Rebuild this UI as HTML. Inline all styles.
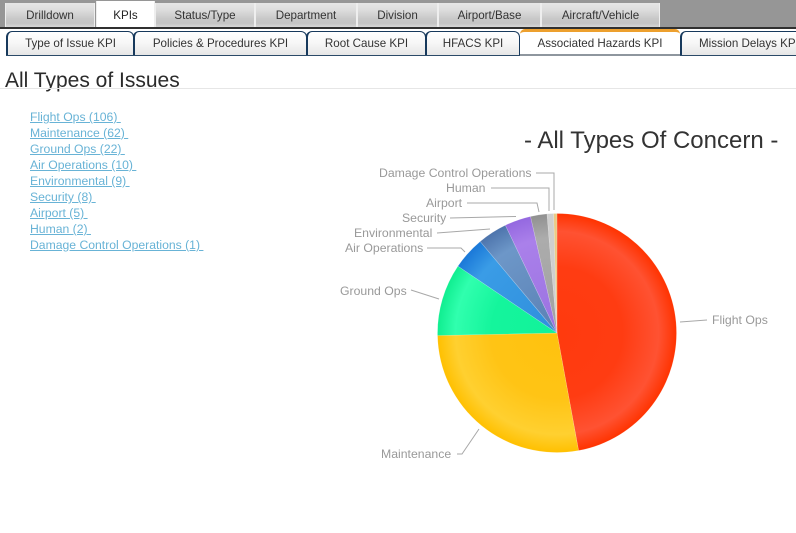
<!DOCTYPE html>
<html><head><meta charset="utf-8">
<style>
html,body{margin:0;padding:0;background:#fff;}
#p{position:relative;width:796px;height:533px;overflow:hidden;font-family:"Liberation Sans",sans-serif;background:#fff;}
.bar{position:absolute;left:0;top:0;width:796px;height:27px;background:#969696;}
.line{position:absolute;left:0;top:27px;width:796px;height:2px;background:#303030;}
.t{position:absolute;top:3px;height:24px;box-sizing:border-box;text-align:center;font-size:11.6px;line-height:25px;color:#333;background:linear-gradient(#e6e6e6 0,#dcdcdc 30%,#c8c8c8 65%,#c4c4c4 85%,#d6d6d6 100%);border-left:1px solid #eee;border-right:1px solid #eee;}
.t.a{background:#fff;top:1px;height:26px;line-height:29px;color:#222;}
.s{position:absolute;top:31px;height:24px;box-sizing:border-box;text-align:center;font-size:11.6px;line-height:24px;color:#333;background:linear-gradient(#fff 0,#f6f6f6 50%,#e6e6e6 100%);border-left:2px solid #17395c;border-right:1px solid #17395c;border-top:1px solid #17395c;border-radius:6px 6px 0 0;}
.s.a{background:#fff;border:none;border-top:3px solid #eda02e;top:29px;height:25px;line-height:23px;border-radius:5px 5px 0 0;}
.u{position:absolute;left:6px;top:54px;width:790px;height:2px;background:#2b4a68;}
.ug{position:absolute;left:520px;top:54px;width:160px;height:2px;background:#8e969e;}
h1{position:absolute;margin:0;left:5px;top:69px;font-size:21px;font-weight:normal;line-height:24px;color:#2b2b2b;white-space:nowrap;}
.hr{position:absolute;left:0;top:88px;width:796px;height:1px;background:#e6e6e6;}
a{position:absolute;left:30px;font-size:12.2px;line-height:16px;color:#68b3d6;text-decoration:underline;white-space:pre;}
.title{position:absolute;left:524px;top:126px;font-size:24px;line-height:30px;color:#333;white-space:nowrap;}
svg{position:absolute;left:0;top:0;}
svg text{font-family:"Liberation Sans",sans-serif;font-size:12.25px;fill:#999;}
</style></head><body><div id="p">
<div class="bar"></div>
<div class="t" style="left:5px;width:90px">Drilldown</div>
<div class="t a" style="left:96px;width:59px">KPIs</div>
<div class="t" style="left:155px;width:100px">Status/Type</div>
<div class="t" style="left:255px;width:102px">Department</div>
<div class="t" style="left:357px;width:81px">Division</div>
<div class="t" style="left:438px;width:103px">Airport/Base</div>
<div class="t" style="left:541px;width:119px">Aircraft/Vehicle</div>
<div class="line"></div>
<div class="u"></div>
<div class="ug"></div>
<div class="s" style="left:6px;width:128px">Type of Issue KPI</div>
<div class="s" style="left:133px;width:174px">Policies &amp; Procedures KPI</div>
<div class="s" style="left:306px;width:120px">Root Cause KPI</div>
<div class="s" style="left:425px;width:95px">HFACS KPI</div>
<div class="s a" style="left:520px;width:160px">Associated Hazards KPI</div>
<div class="s" style="left:680px;width:130px;text-align:left;padding-left:17px">Mission Delays KPI</div>
<h1>All Types of Issues</h1>
<div class="hr"></div>
<a style="top:109px">Flight Ops (106) </a>
<a style="top:125px">Maintenance (62) </a>
<a style="top:141px">Ground Ops (22) </a>
<a style="top:157px">Air Operations (10) </a>
<a style="top:173px">Environmental (9) </a>
<a style="top:189px">Security (8) </a>
<a style="top:205px">Airport (5) </a>
<a style="top:221px">Human (2) </a>
<a style="top:237px">Damage Control Operations (1) </a>
<div class="title">- All Types Of Concern -</div>
<svg width="796" height="533" viewBox="0 0 796 533">
<defs>
<radialGradient id="g1" gradientUnits="userSpaceOnUse" cx="557" cy="333" r="119.5"><stop offset="0" stop-color="#ff3a0e"/><stop offset=".55" stop-color="#ff3c12"/><stop offset=".85" stop-color="#ff5232"/><stop offset="1" stop-color="#ff3300"/></radialGradient>
<radialGradient id="g2" gradientUnits="userSpaceOnUse" cx="557" cy="333" r="119.5"><stop offset="0" stop-color="#ffc20e"/><stop offset=".55" stop-color="#ffc415"/><stop offset=".85" stop-color="#ffd030"/><stop offset="1" stop-color="#ffc000"/></radialGradient>
<radialGradient id="g3" gradientUnits="userSpaceOnUse" cx="557" cy="333" r="119.5"><stop offset="0" stop-color="#12f29a"/><stop offset=".55" stop-color="#14f59c"/><stop offset=".85" stop-color="#30ffae"/><stop offset="1" stop-color="#10ee90"/></radialGradient>
<radialGradient id="g4" gradientUnits="userSpaceOnUse" cx="557" cy="333" r="119.5"><stop offset="0" stop-color="#2f8fdc"/><stop offset=".8" stop-color="#3a9ce6"/><stop offset="1" stop-color="#1a78d8"/></radialGradient>
<radialGradient id="g5" gradientUnits="userSpaceOnUse" cx="557" cy="333" r="119.5"><stop offset="0" stop-color="#5a80b4"/><stop offset=".8" stop-color="#6d97c8"/><stop offset="1" stop-color="#4d74ac"/></radialGradient>
<radialGradient id="g6" gradientUnits="userSpaceOnUse" cx="557" cy="333" r="119.5"><stop offset="0" stop-color="#9a72e0"/><stop offset=".8" stop-color="#aa80ea"/><stop offset="1" stop-color="#9468e0"/></radialGradient>
<radialGradient id="g7" gradientUnits="userSpaceOnUse" cx="557" cy="333" r="119.5"><stop offset="0" stop-color="#a0a0a0"/><stop offset=".8" stop-color="#acacac"/><stop offset="1" stop-color="#909090"/></radialGradient>
</defs>
<g stroke="#fff" stroke-opacity=".25" stroke-width=".6">
<path d="M557 333L557 213.5A119.5 119.5 0 0 1 578.57 450.54Z" fill="url(#g1)"/>
<path d="M557 333L578.57 450.54A119.5 119.5 0 0 1 437.53 335.5Z" fill="url(#g2)"/>
<path d="M557 333L437.53 335.5A119.5 119.5 0 0 1 457.93 266.18Z" fill="url(#g3)"/>
<path d="M557 333L457.93 266.18A119.5 119.5 0 0 1 480.19 241.46Z" fill="url(#g4)"/>
<path d="M557 333L480.19 241.46A119.5 119.5 0 0 1 505.36 225.23Z" fill="url(#g5)"/>
<path d="M557 333L505.36 225.23A119.5 119.5 0 0 1 530.53 216.47Z" fill="url(#g6)"/>
<path d="M557 333L530.53 216.47A119.5 119.5 0 0 1 547 213.92Z" fill="url(#g7)"/>
<path d="M557 333L547 213.92A119.5 119.5 0 0 1 553.66 213.55Z" fill="#cfcfcf"/>
<path d="M557 333L553.66 213.55A119.5 119.5 0 0 1 557 213.5Z" fill="#eacb86"/>
</g>
<g fill="none" stroke="#a8a8a8" stroke-width="1">
<path d="M536 173H554V210"/>
<path d="M491 188H549V211"/>
<path d="M467 203H537L539 212"/>
<path d="M450 218L516 216.5"/>
<path d="M437 233L490 229"/>
<path d="M427 248H461L465 252"/>
<path d="M411 290L439 299"/>
<path d="M680 322L707 320"/>
<path d="M457 454H462L479 429"/>
</g>
<text x="379" y="177">Damage Control Operations</text>
<text x="446" y="192">Human</text>
<text x="426" y="207">Airport</text>
<text x="402" y="222">Security</text>
<text x="354" y="237">Environmental</text>
<text x="345" y="252">Air Operations</text>
<text x="340" y="295">Ground Ops</text>
<text x="712" y="324">Flight Ops</text>
<text x="381" y="458">Maintenance</text>
</svg>
</div></body></html>
